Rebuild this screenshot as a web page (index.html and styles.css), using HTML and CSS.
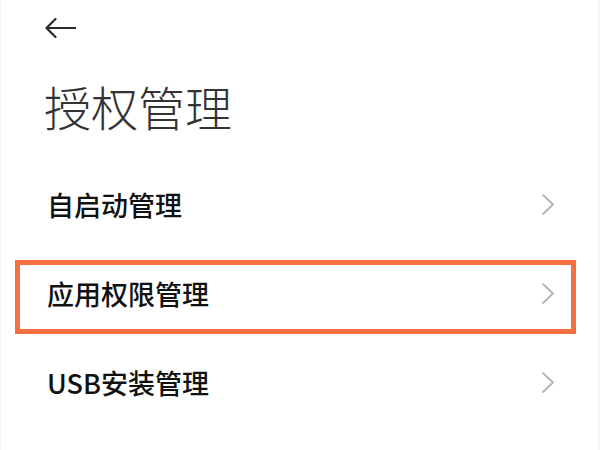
FILE: index.html
```html
<!DOCTYPE html>
<html lang="zh-CN">
<head>
<meta charset="utf-8">
<title>授权管理</title>
<link rel="stylesheet" href="styles.css">
</head>
<body>
<div class="page">
  <header class="header">
    <svg class="back" width="31" height="20" viewBox="0 0 31 20" aria-hidden="true">
      <path d="M30.5 10H1.5M10.5 1L1.5 10L10.5 19" fill="none" stroke="#2b2b2b" stroke-width="2.2" stroke-linecap="round" stroke-linejoin="round"/>
    </svg>
    <h1 class="title">授权管理</h1>
  </header>
  <ul class="list">
    <li class="row">
      <span class="label">自启动管理</span>
      <svg class="chev" width="12" height="21" viewBox="0 0 12 21" aria-hidden="true"><path d="M1 1L11 10.5L1 20" fill="none" stroke="#b3b3b3" stroke-width="1.8" stroke-linecap="round" stroke-linejoin="round"/></svg>
    </li>
    <li class="row highlight">
      <span class="label">应用权限管理</span>
      <svg class="chev" width="12" height="21" viewBox="0 0 12 21" aria-hidden="true"><path d="M1 1L11 10.5L1 20" fill="none" stroke="#b3b3b3" stroke-width="1.8" stroke-linecap="round" stroke-linejoin="round"/></svg>
    </li>
    <li class="row">
      <span class="label">USB安装管理</span>
      <svg class="chev" width="12" height="21" viewBox="0 0 12 21" aria-hidden="true"><path d="M1 1L11 10.5L1 20" fill="none" stroke="#b3b3b3" stroke-width="1.8" stroke-linecap="round" stroke-linejoin="round"/></svg>
    </li>
  </ul>
</div>
</body>
</html>
```
FILE: styles.css
```css
html, body {
  margin: 0;
  padding: 0;
  background: #ffffff;
}
body {
  font-family: "Noto Sans CJK SC", "Noto Sans", sans-serif;
}
.page {
  width: 600px;
  height: 450px;
  box-sizing: border-box;
  border-left: 1px solid #f3f3f3;
  border-right: 2px solid #f5f5f5;
  overflow: hidden;
}
.header {
  padding: 18px 0 0 44px;
}
.back {
  display: block;
}
.title {
  margin: 44px 0 0 -1px;
  font-size: 47px;
  line-height: 1;
  font-weight: 300;
  color: #333333;
  letter-spacing: 0;
}
.list {
  list-style: none;
  margin: 31px 0 0 0;
  padding: 0;
}
.row {
  position: relative;
  height: 89px;
  display: flex;
  align-items: center;
  justify-content: space-between;
  padding: 0 44px 0 46px;
}
.label {
  font-size: 27px;
  line-height: 1;
  font-weight: 500;
  color: #111111;
}
.chev {
  display: block;
}
.highlight::after {
  content: "";
  position: absolute;
  left: 14px;
  right: 22px;
  top: 11px;
  bottom: 4px;
  border: 5px solid #f96e40;
  pointer-events: none;
}
```
